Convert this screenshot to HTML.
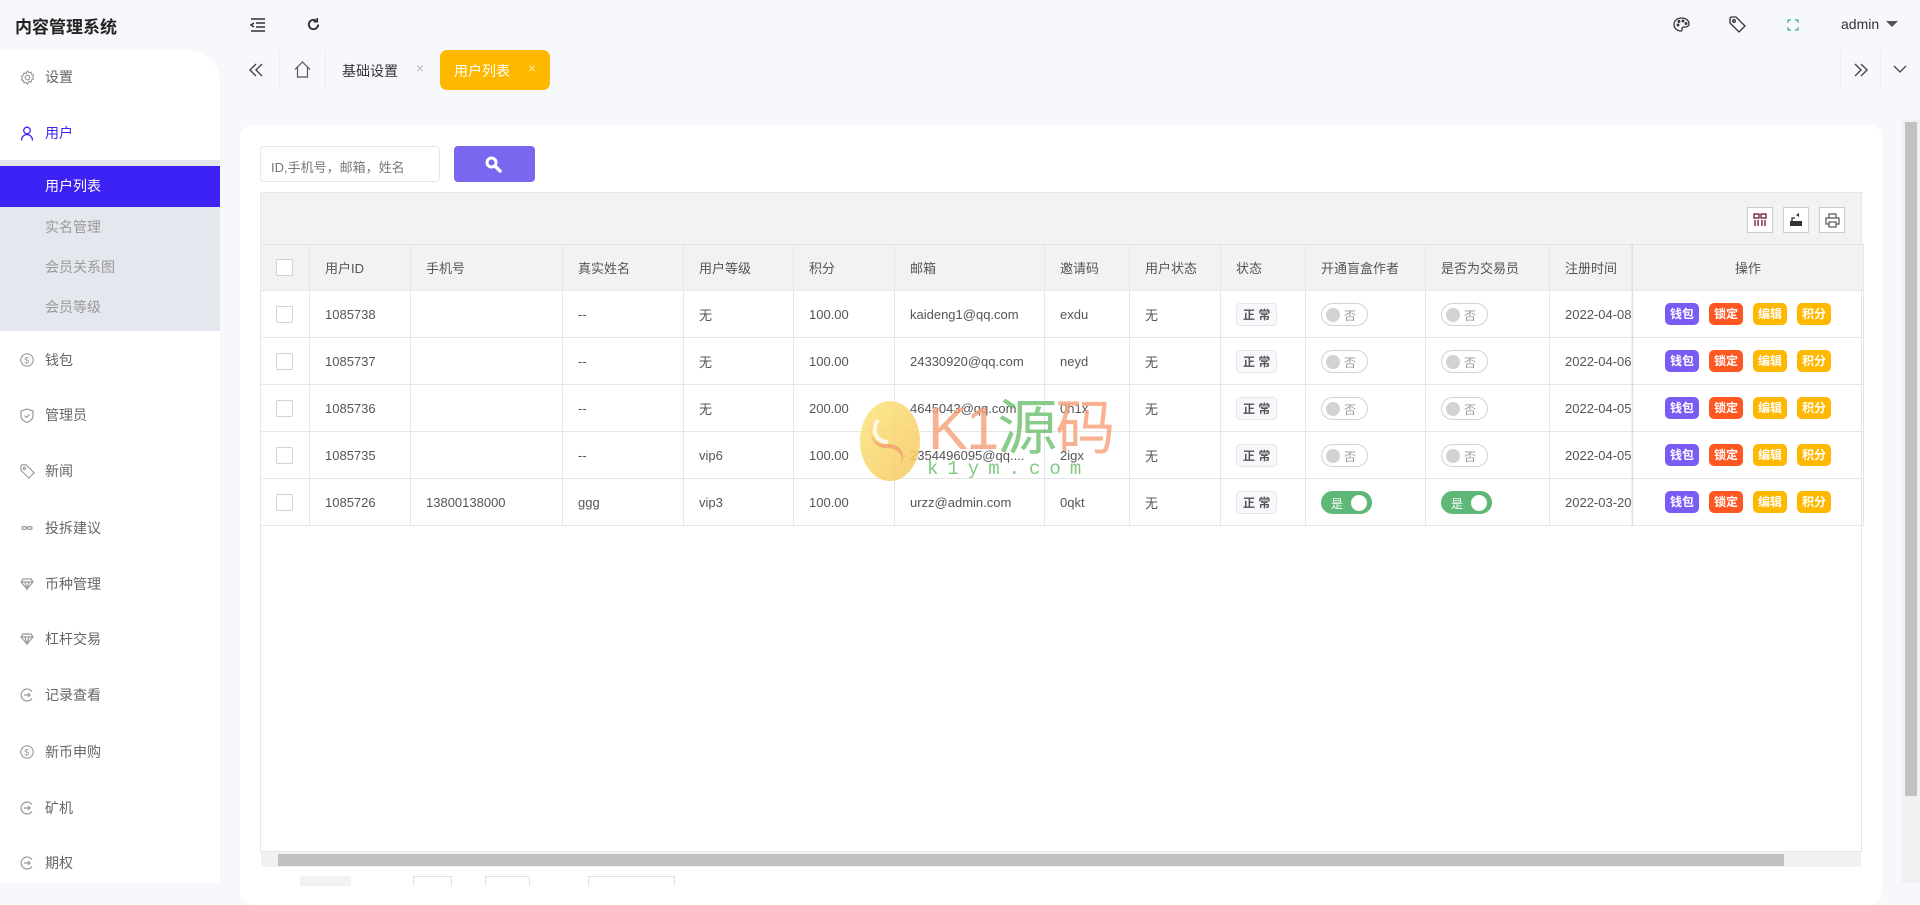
<!DOCTYPE html>
<html><head><meta charset="utf-8"><style>
*{box-sizing:border-box;margin:0;padding:0}
body{width:1920px;height:883px;overflow:hidden;background:#f7f8fc;font-family:"Liberation Sans","Noto Sans CJK SC",sans-serif;color:#333;position:relative}
.abs{position:absolute}
.logo{left:15px;top:13px;font-size:17px;font-weight:bold;color:#222}
.side{left:0;top:50px;width:220px;height:833px;background:#fff;border-top-right-radius:32px}
.mi{position:absolute;left:0;width:220px;height:24px;font-size:14px;color:#666;line-height:24px}
.mi svg{position:absolute;left:20px;top:5px}
.mi span{position:absolute;left:45px}
.sub{position:absolute;left:0;top:110px;width:220px;height:171px;background:#e5e7ef}
.sub div{position:absolute;left:45px;font-size:14px;color:#999}
.card{left:240px;top:125px;width:1642px;height:780px;background:#fff;border-radius:12px}
table{border-collapse:collapse;table-layout:fixed;position:absolute;left:260px;top:244px;font-size:13px;color:#555}
td,th{border:1px solid #e6e6e6;height:47px;padding:0 15px;text-align:left;font-weight:normal;white-space:nowrap;overflow:hidden}
th{background:#f2f2f2;height:46px}
.cb{display:inline-block;width:17px;height:17px;border:1px solid #d2d2d2;border-radius:2px;background:#fff;vertical-align:middle}
.zc{display:inline-block;border:1px solid #e6e6e6;background:#f6f8fb;border-radius:4px;font-size:12px;font-weight:bold;padding:2px 6px;color:#555}
.sw{display:inline-block;width:47px;height:23px;border:1px solid #d2d2d2;border-radius:12px;position:relative;vertical-align:middle;font-size:12px;color:#999}
.sw:before{content:"";position:absolute;left:4px;top:4px;width:14px;height:14px;border-radius:50%;background:#d2d2d2}
.sw span{position:absolute;left:22px;top:3px}
.sw.on{background:#5fb878;border-color:#5fb878;width:51px;color:#fff}
.sw.on:before{left:auto;right:4px;top:3px;width:16px;height:16px;background:#fff}
.sw.on span{left:9px}
.b{display:inline-block;width:34px;height:22px;line-height:22px;text-align:center;border-radius:5px;color:#fff;font-size:12px;font-weight:bold;margin:0 5px}
</style></head><body>
<div class="abs logo">内容管理系统</div>
<svg class="abs" style="left:250px;top:18px" width="16" height="14" viewBox="0 0 16 14" fill="none" stroke="#333" stroke-width="1.6"><path d="M1 1h14M6 5h9M6 9h9M1 13h14M4 5L1 7l3 2"/></svg>
<svg class="abs" style="left:306px;top:17px" width="15" height="15" viewBox="0 0 16 16" fill="none" stroke="#333" stroke-width="2"><path d="M13 8a5 5 0 1 1-2-4"/><path d="M12 1v4H8" stroke-width="1.8"/></svg>
<svg class="abs" style="left:1673px;top:17px" width="17" height="15" viewBox="0 0 17 15" fill="none" stroke="#333" stroke-width="1.3"><path d="M8.5 1C4 1 1 4 1 7.5S4 14 8 14c1.5 0 1-1.5 1-2.5s1-1.5 2.5-1.5S16 10 16 7C16 3.5 13 1 8.5 1z"/><circle cx="5" cy="8" r=".8"/><circle cx="6" cy="4.5" r=".8"/><circle cx="10" cy="4" r=".8"/><circle cx="13" cy="6.5" r=".8"/></svg>
<svg class="abs" style="left:1729px;top:16px" width="17" height="17" viewBox="0 0 17 17" fill="none" stroke="#333" stroke-width="1.3"><path d="M1 2V7l9 9 6-6-9-9H2z"/><circle cx="5" cy="5" r="1.3"/></svg>
<svg class="abs" style="left:1787px;top:19px" width="12" height="12" viewBox="0 0 12 12" fill="none" stroke="#4a7" stroke-width="1.2"><path d="M1 4V1h3M8 1h3v3M11 8v3H8M4 11H1V8"/></svg>
<div class="abs" style="left:1841px;top:16px;font-size:14px;color:#333">admin</div>
<div class="abs" style="left:1886px;top:21px;border:6px solid transparent;border-top:6px solid #555;border-bottom:0"></div>

<div class="abs side">
<div class="mi" style="top:15px"><svg width="15" height="15" viewBox="0 0 16 16" fill="none" stroke="#999" stroke-width="1.2"><circle cx="8" cy="8" r="2.5"/><path d="M8 1l1.5 1.8 2.3-.6.5 2.3 2.2 1-1 2 1 2-2.2 1-.5 2.3-2.3-.6L8 15l-1.5-1.8-2.3.6-.5-2.3-2.2-1 1-2-1-2 2.2-1 .5-2.3 2.3.6z"/></svg><span>设置</span></div>
<div class="mi" style="top:71px;color:#3d22f5"><svg width="14" height="15" viewBox="0 0 14 15" fill="none" stroke="#3d22f5" stroke-width="1.3"><circle cx="7" cy="4.5" r="3.3"/><path d="M1.5 14.5c0-3.5 2.5-6 5.5-6s5.5 2.5 5.5 6"/></svg><span>用户</span></div>
<div class="sub">
<div style="left:0;top:6px;width:220px;height:41px;background:#3d22f5"></div>
<div style="top:16px;color:#fff">用户列表</div>
<div style="top:57px">实名管理</div>
<div style="top:97px">会员关系图</div>
<div style="top:137px">会员等级</div>
</div>
<div class="mi" style="top:298px"><svg width="14" height="14" viewBox="0 0 14 14" fill="none" stroke="#999" stroke-width="1.1"><circle cx="7" cy="7" r="6.2"/><text x="4.3" y="10.5" font-size="9" fill="#999" stroke="none">$</text></svg><span>钱包</span></div>
<div class="mi" style="top:353px"><svg width="14" height="15" viewBox="0 0 14 15" fill="none" stroke="#999" stroke-width="1.2"><path d="M7 1l6 2v5c0 3-3 5.5-6 6.5C4 13.5 1 11 1 8V3z"/><path d="M4.5 7.5l2 2 3-3"/></svg><span>管理员</span></div>
<div class="mi" style="top:409px"><svg width="15" height="15" viewBox="0 0 17 17" fill="none" stroke="#999" stroke-width="1.3"><path d="M1 2V7l9 9 6-6-9-9H2z"/><circle cx="5" cy="5" r="1.3"/></svg><span>新闻</span></div>
<div class="mi" style="top:466px"><svg width="14" height="14" viewBox="0 0 14 14" fill="none" stroke="#999" stroke-width="1.2"><path d="M7 7c-1.5-2-5-2-5 0s3.5 2 5 0 5-2 5 0-3.5 2-5 0z"/></svg><span>投拆建议</span></div>
<div class="mi" style="top:522px"><svg width="14" height="14" viewBox="0 0 14 14" fill="none" stroke="#999" stroke-width="1.2"><path d="M1 5l2-3h8l2 3-6 7z M1 5h12M5 5l2 7 2-7"/></svg><span>币种管理</span></div>
<div class="mi" style="top:577px"><svg width="14" height="14" viewBox="0 0 14 14" fill="none" stroke="#999" stroke-width="1.2"><path d="M1 5l2-3h8l2 3-6 7z M1 5h12M5 5l2 7 2-7"/></svg><span>杠杆交易</span></div>
<div class="mi" style="top:633px"><svg width="14" height="14" viewBox="0 0 14 14" fill="none" stroke="#999" stroke-width="1.2"><path d="M12 3.5A6 6 0 1 0 12 10.5"/><path d="M4 7h6M8 5l2 2-2 2"/></svg><span>记录查看</span></div>
<div class="mi" style="top:690px"><svg width="14" height="14" viewBox="0 0 14 14" fill="none" stroke="#999" stroke-width="1.1"><circle cx="7" cy="7" r="6.2"/><text x="4.3" y="10.5" font-size="9" fill="#999" stroke="none">$</text></svg><span>新币申购</span></div>
<div class="mi" style="top:746px"><svg width="14" height="14" viewBox="0 0 14 14" fill="none" stroke="#999" stroke-width="1.2"><path d="M12 3.5A6 6 0 1 0 12 10.5"/><path d="M4 7h6M8 5l2 2-2 2"/></svg><span>矿机</span></div>
<div class="mi" style="top:801px"><svg width="14" height="14" viewBox="0 0 14 14" fill="none" stroke="#999" stroke-width="1.2"><path d="M12 3.5A6 6 0 1 0 12 10.5"/><path d="M4 7h6M8 5l2 2-2 2"/></svg><span>期权</span></div>
</div>

<!-- tabs -->
<svg class="abs" style="left:249px;top:63px" width="14" height="14" viewBox="0 0 14 14" fill="none" stroke="#444" stroke-width="1.4"><path d="M7 1L1 7l6 6M13 1L7 7l6 6"/></svg>
<div class="abs" style="left:279px;top:50px;width:1px;height:40px;background:#eee"></div>
<svg class="abs" style="left:294px;top:61px" width="17" height="17" viewBox="0 0 17 17" fill="none" stroke="#555" stroke-width="1.2"><path d="M1 8.5L8.5 1 16 8.5M3.5 6v10h10V6"/></svg>
<div class="abs" style="left:325px;top:50px;width:1px;height:40px;background:#eee"></div>
<div class="abs" style="left:342px;top:61px;font-size:14px;color:#333">基础设置</div>
<div class="abs" style="left:416px;top:60px;font-size:14px;color:#bbb">×</div>
<div class="abs" style="left:440px;top:50px;width:110px;height:40px;background:#ffb800;border-radius:7px"></div>
<div class="abs" style="left:454px;top:61px;font-size:14px;color:#fff">用户列表</div>
<div class="abs" style="left:528px;top:60px;font-size:14px;color:#ffe7a0">×</div>
<div class="abs" style="left:1840px;top:50px;width:1px;height:40px;background:#eee"></div>
<div class="abs" style="left:1880px;top:50px;width:1px;height:40px;background:#eee"></div>
<svg class="abs" style="left:1854px;top:63px" width="14" height="14" viewBox="0 0 14 14" fill="none" stroke="#444" stroke-width="1.4"><path d="M1 1l6 6-6 6M7 1l6 6-6 6"/></svg>
<svg class="abs" style="left:1893px;top:65px" width="14" height="9" viewBox="0 0 14 9" fill="none" stroke="#444" stroke-width="1.3"><path d="M1 1l6 6 6-6"/></svg>

<div class="abs card"></div>
<div class="abs" style="left:1902px;top:120px;width:18px;height:763px;background:#f1f1f1"></div>
<div class="abs" style="left:1905px;top:122px;width:12px;height:674px;background:#c1c1c1"></div>

<div class="abs" style="left:260px;top:146px;width:180px;height:36px;border:1px solid #e6e6e6;border-radius:4px;font-size:13px;color:#777;padding:10px 0 0 10px">ID,手机号，邮箱，姓名</div>
<div class="abs" style="left:454px;top:146px;width:81px;height:36px;background:#7a67f0;border-radius:4px"></div>
<svg class="abs" style="left:484px;top:155px" width="18" height="18" viewBox="0 0 18 18"><circle cx="7.5" cy="7.5" r="6" fill="#fff"/><circle cx="7.5" cy="7.5" r="3" fill="#7a67f0"/><path d="M11 11l5 5" stroke="#fff" stroke-width="3.5" stroke-linecap="round"/></svg>

<div class="abs" style="left:260px;top:192px;width:1602px;height:660px;border:1px solid #e6e6e6"></div>
<div class="abs" style="left:261px;top:193px;width:1600px;height:51px;background:#f2f2f2"></div>
<div class="abs" style="left:1747px;top:207px;width:26px;height:26px;border:1px solid #ccc;background:#fff"></div>
<svg class="abs" style="left:1753px;top:213px" width="14" height="14" viewBox="0 0 14 14" fill="none" stroke="#602" stroke-width="1.2"><rect x="1" y="1" width="5" height="4"/><rect x="8" y="1" width="5" height="4"/><path d="M2 7v6M5 7v6M9 7v6M12 7v6"/></svg>
<div class="abs" style="left:1783px;top:207px;width:26px;height:26px;border:1px solid #ccc;background:#fff"></div>
<svg class="abs" style="left:1789px;top:212px" width="14" height="15" viewBox="0 0 14 15"><rect x="1" y="9" width="12" height="5" fill="#333"/><path d="M3 9V6h3" stroke="#333" fill="none" stroke-width="1.3"/><path d="M7 3l3-2v4z" fill="#333"/></svg>
<div class="abs" style="left:1819px;top:207px;width:26px;height:26px;border:1px solid #ccc;background:#fff"></div>
<svg class="abs" style="left:1825px;top:213px" width="15" height="15" viewBox="0 0 15 15" fill="none" stroke="#555" stroke-width="1.2"><path d="M4 5V1h7v4M4 11H1V5h13v6h-3"/><rect x="4" y="9" width="7" height="5"/></svg>

<table>
<colgroup><col style="width:49px"><col style="width:101px"><col style="width:152px"><col style="width:121px"><col style="width:110px"><col style="width:101px"><col style="width:150px"><col style="width:85px"><col style="width:91px"><col style="width:85px"><col style="width:120px"><col style="width:124px"><col style="width:82px"><col style="width:231px"></colgroup>
<tr><th><span class="cb"></span></th><th>用户ID</th><th>手机号</th><th>真实姓名</th><th>用户等级</th><th>积分</th><th>邮箱</th><th>邀请码</th><th>用户状态</th><th>状态</th><th>开通盲盒作者</th><th>是否为交易员</th><th>注册时间</th><th style="text-align:center">操作</th></tr>
<tr><td><span class="cb"></span></td><td>1085738</td><td></td><td>--</td><td>无</td><td>100.00</td><td>kaideng1@qq.com</td><td>exdu</td><td>无</td><td><span class="zc">正 常</span></td><td><span class="sw"><span>否</span></span></td><td><span class="sw"><span>否</span></span></td><td style="padding-right:0">2022-04-08</td><td style="text-align:center"><span class="b" style="background:#7a5cf5">钱包</span><span class="b" style="background:#ff5722">锁定</span><span class="b" style="background:#ffb800">编辑</span><span class="b" style="background:#ffb800">积分</span></td></tr>
<tr><td><span class="cb"></span></td><td>1085737</td><td></td><td>--</td><td>无</td><td>100.00</td><td>24330920@qq.com</td><td>neyd</td><td>无</td><td><span class="zc">正 常</span></td><td><span class="sw"><span>否</span></span></td><td><span class="sw"><span>否</span></span></td><td style="padding-right:0">2022-04-06</td><td style="text-align:center"><span class="b" style="background:#7a5cf5">钱包</span><span class="b" style="background:#ff5722">锁定</span><span class="b" style="background:#ffb800">编辑</span><span class="b" style="background:#ffb800">积分</span></td></tr>
<tr><td><span class="cb"></span></td><td>1085736</td><td></td><td>--</td><td>无</td><td>200.00</td><td>4645043@qq.com</td><td>0h1x</td><td>无</td><td><span class="zc">正 常</span></td><td><span class="sw"><span>否</span></span></td><td><span class="sw"><span>否</span></span></td><td style="padding-right:0">2022-04-05</td><td style="text-align:center"><span class="b" style="background:#7a5cf5">钱包</span><span class="b" style="background:#ff5722">锁定</span><span class="b" style="background:#ffb800">编辑</span><span class="b" style="background:#ffb800">积分</span></td></tr>
<tr><td><span class="cb"></span></td><td>1085735</td><td></td><td>--</td><td>vip6</td><td>100.00</td><td>2354496095@qq....</td><td>2igx</td><td>无</td><td><span class="zc">正 常</span></td><td><span class="sw"><span>否</span></span></td><td><span class="sw"><span>否</span></span></td><td style="padding-right:0">2022-04-05</td><td style="text-align:center"><span class="b" style="background:#7a5cf5">钱包</span><span class="b" style="background:#ff5722">锁定</span><span class="b" style="background:#ffb800">编辑</span><span class="b" style="background:#ffb800">积分</span></td></tr>
<tr><td><span class="cb"></span></td><td>1085726</td><td>13800138000</td><td>ggg</td><td>vip3</td><td>100.00</td><td>urzz@admin.com</td><td>0qkt</td><td>无</td><td><span class="zc">正 常</span></td><td><span class="sw on"><span>是</span></span></td><td><span class="sw on"><span>是</span></span></td><td style="padding-right:0">2022-03-20</td><td style="text-align:center"><span class="b" style="background:#7a5cf5">钱包</span><span class="b" style="background:#ff5722">锁定</span><span class="b" style="background:#ffb800">编辑</span><span class="b" style="background:#ffb800">积分</span></td></tr>
</table>
<div class="abs" style="left:1631px;top:244px;width:3px;height:282px;background:linear-gradient(90deg,rgba(0,0,0,.06),rgba(0,0,0,0))"></div>

<!-- watermark -->
<svg class="abs" style="left:858px;top:400px" width="64" height="82" viewBox="0 0 64 82"><defs><linearGradient id="g" x1="0" y1="0" x2="1" y2="1"><stop offset="0" stop-color="#fbe57a"/><stop offset="1" stop-color="#f7c560"/></linearGradient></defs><ellipse cx="32" cy="41" rx="30" ry="40" fill="url(#g)" opacity=".85"/><path d="M20 20c-12 10-6 25 8 24 14-1 22 10 14 22 6-12-4-18-14-18-14 0-20-16-8-28z" fill="#f08a6a" opacity=".6"/><path d="M20 20c-8 12 0 22 10 22" stroke="#fff" stroke-width="4" fill="none" opacity=".8"/></svg>
<div class="abs" style="left:928px;top:398px;font-size:60px;line-height:62px;letter-spacing:-2px;opacity:.8"><span style="color:#f7a078">K1</span><span style="color:#6cc06c">源</span><span style="color:#f7a078">码</span></div>
<div class="abs" style="left:927px;top:458px;font-size:19px;letter-spacing:9px;color:#6cc06c;opacity:.85;font-family:'Liberation Mono',monospace">k1ym.com</div>

<div class="abs" style="left:261px;top:852px;width:1600px;height:15px;background:#f1f1f1"></div>
<div class="abs" style="left:278px;top:854px;width:1506px;height:12px;background:#c1c1c1"></div>
<div class="abs" style="left:300px;top:876px;width:51px;height:10px;background:#f2f2f2;border-radius:2px"></div>
<div class="abs" style="left:413px;top:876px;width:39px;height:10px;border:1px solid #e2e2e2;border-bottom:0"></div>
<div class="abs" style="left:485px;top:876px;width:45px;height:10px;border:1px solid #e2e2e2;border-bottom:0"></div>
<div class="abs" style="left:588px;top:876px;width:87px;height:10px;border:1px solid #e2e2e2;border-bottom:0"></div>
</body></html>
